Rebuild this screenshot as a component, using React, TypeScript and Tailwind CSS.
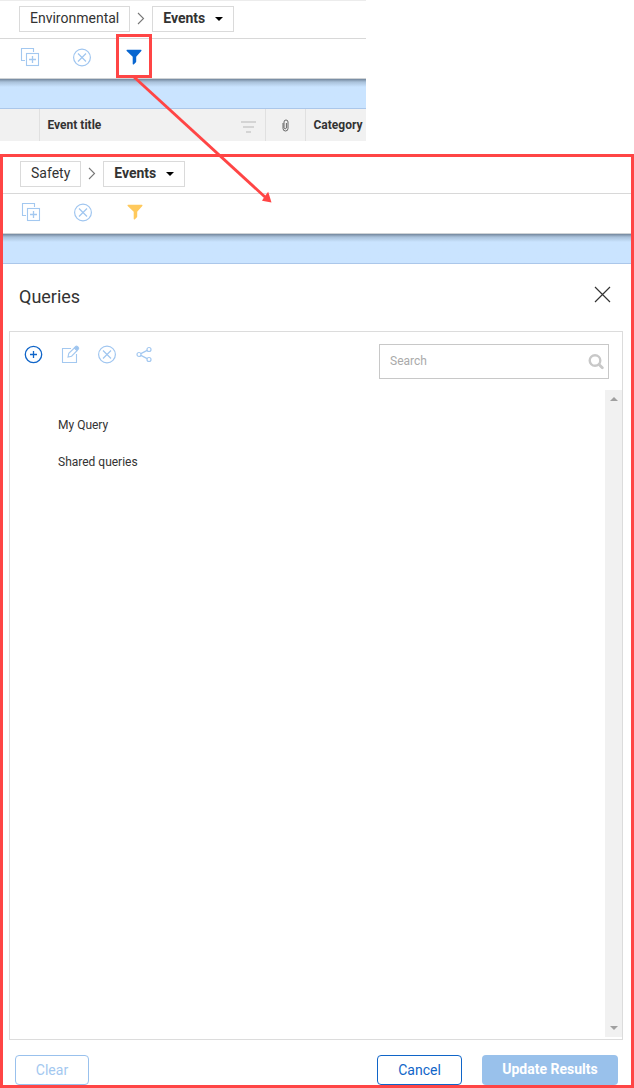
import { useState } from "react";

function AddCopyIcon() {
  return (
    <svg width="20" height="20" viewBox="0 0 20 20" fill="none" stroke="#a3c8f0" strokeWidth="1.1" aria-hidden="true">
      <path d="M5 13.500H1.500V1.500H13.500V5" />
      <rect x="6.500" y="6.500" width="12" height="12" />
      <path d="M12.500 9v7M9 12.500h7" strokeWidth="1.300" />
    </svg>
  );
}

function CircleXIcon() {
  return (
    <svg width="20" height="20" viewBox="0 0 20 20" fill="none" stroke="#a0c6f0" strokeWidth="1.2" aria-hidden="true">
      <circle cx="10" cy="10.500" r="8.400" />
      <path d="M6 6.500l8 8M14 6.500l-8 8" />
    </svg>
  );
}

function CirclePlusIcon() {
  return (
    <svg width="20" height="20" viewBox="0 0 20 20" fill="none" stroke="#1065c8" strokeWidth="1.3" aria-hidden="true">
      <circle cx="10.500" cy="10.500" r="8.200" />
      <path d="M10.500 7v7M7 10.500h7" />
    </svg>
  );
}

function EditIcon() {
  return (
    <svg width="20" height="20" viewBox="0 0 20 20" fill="none" stroke="#a3c8f0" strokeWidth="1.1" aria-hidden="true">
      <path d="M11 4.500H2.500v14h14V10" />
      <path d="M8 13l.8-3.600L14.300 4l2.700 2.700L11.600 12.200z" />
      <path d="M14.500 3.700l1.200-1.200q.8-.8 1.700 0l.9.9q.9.900 0 1.800l-1.200 1.200z" fill="#9cc3ee" />
    </svg>
  );
}

function ShareIcon() {
  return (
    <svg width="20" height="20" viewBox="0 0 20 20" fill="none" stroke="#a3c8f0" strokeWidth="1.2" aria-hidden="true">
      <circle cx="5" cy="10.500" r="2" />
      <circle cx="15" cy="5.500" r="2" />
      <circle cx="15" cy="15.500" r="2" />
      <path d="M6.900 9.600l6.300-3.200M6.900 11.400l6.300 3.200" />
    </svg>
  );
}

function FunnelIcon({ color }: { color: string }) {
  return (
    <svg width="20" height="20" viewBox="0 0 20 20" fill={color} aria-hidden="true">
      <path d="M3.200 2.800h13.600q1.200 0 .5 1.200L12.200 9.800v4.800q0 .6-.5 1l-2 1.800q-1 .6-1-.6V9.800L2.700 4q-.7-1.200.5-1.200z" />
    </svg>
  );
}

function AppBar({ site, funnel, tight, marked }: { site: string; funnel: string; tight?: boolean; marked?: boolean }) {
  const inset = tight ? "pl-[17px]" : "pl-[19px]";
  return (
    <header>
      <nav
        aria-label="Breadcrumb"
        className={`flex items-center border-b border-[#d8d8d8] pb-[6px] text-sm text-[#333] ${inset} ${tight ? "pt-1" : "border-t border-t-[#ececec] pt-[5px]"}`}
      >
        <a href="#site" className="flex h-[26px] items-center border border-[#dadada] px-[10px] pb-[2px]">
          {site}
        </a>
        <svg width="22" height="14" viewBox="0 0 22 14" fill="none" stroke="#777" strokeWidth="1.1" aria-hidden="true">
          <path d="M8 1l5.500 5.500L8 12" />
        </svg>
        <button className="flex h-[26px] items-center gap-[10px] border border-[#dadada] px-[10px] pb-[2px] font-bold">
          Events
          <svg width="8" height="4" viewBox="0 0 8 4" className="mt-[2px]" aria-hidden="true">
            <path d="M0 0h8L4 4z" fill="#000" />
          </svg>
        </button>
      </nav>
      <div className={`flex h-10 items-center gap-8 border-b border-[#cfd3d6] pb-[3px] ${tight ? "pl-[18px]" : "pl-5"}`}>
        <button aria-label="Add" disabled>
          <AddCopyIcon />
        </button>
        <button aria-label="Delete" disabled>
          <CircleXIcon />
        </button>
        <button aria-label="Filter" className="relative">
          <FunnelIcon color={funnel} />
          {marked && <span className="absolute -top-[13px] -left-2 h-[44px] w-9 border-[3px] border-[#ff4545]" />}
        </button>
      </div>
      <div className="h-[30px] border-b border-[#abc7ea] bg-[#cae4ff] bg-linear-to-b from-[#72869c] via-[#a9c1da] via-[3px] to-[#cae4ff] to-[8px]" />
    </header>
  );
}

export default function App() {
  const [search, setSearch] = useState("");
  return (
    <div className="relative flex min-h-screen flex-col bg-white font-[Roboto,sans-serif] text-[#333]">
      <section className="w-[366px] max-w-full">
        <AppBar site="Environmental" funnel="#0866d0" marked />
        <table className="w-full table-fixed border-collapse bg-[#f1f1f1] text-left text-xs">
          <colgroup>
            <col className="w-[39px]" />
            <col />
            <col className="w-10" />
            <col className="w-[61px]" />
          </colgroup>
          <thead>
            <tr className="h-8">
              <th aria-label="Select" />
              <th className="border-l border-[#e0e0e0] pl-2">
                <div className="flex items-center justify-between pr-2">
                  Event title
                  <svg width="16" height="13" viewBox="0 0 16 13" className="mt-1" aria-hidden="true">
                    <path d="M0 1h15M2 6h11M5 11h5" stroke="#d4d4d4" strokeWidth="2" />
                  </svg>
                </div>
              </th>
              <th aria-label="Attachments" className="border-l border-[#e0e0e0]">
                <svg width="7" height="13" viewBox="0 0 7 13" className="mx-auto" fill="none" stroke="#666" strokeWidth="1" aria-hidden="true">
                  <path d="M1 4v5.500a2.500 2.500 0 0 0 5 0V3a2 2 0 0 0-4 0v6a1.300 1.300 0 0 0 2.400 0V4" />
                </svg>
              </th>
              <th className="border-l border-[#e0e0e0] pl-2">Category</th>
            </tr>
          </thead>
        </table>
      </section>

      <section className="mt-[13px] flex grow flex-col border-[3px] border-[#ff4545]">
        <AppBar site="Safety" funnel="#ffc95c" tight />
        <div className="flex h-[67px] items-center justify-between pr-5 pb-[2px] pl-4">
          <h1 className="text-lg">Queries</h1>
          <button aria-label="Close" className="pb-1">
            <svg width="17" height="17" viewBox="0 0 17 17" stroke="#333" strokeWidth="1.200" aria-hidden="true">
              <path d="M1 1l15 15M16 1L1 16" />
            </svg>
          </button>
        </div>

        <main className="mr-2 ml-[6px] flex grow flex-col border border-[#dcdcdc]">
          <div className="flex items-start justify-between pt-3 pr-[13px] pl-[13px]">
            <div className="flex gap-[17px]">
              <button aria-label="New query">
                <CirclePlusIcon />
              </button>
              <button aria-label="Edit query" disabled>
                <EditIcon />
              </button>
              <button aria-label="Delete query" disabled>
                <CircleXIcon />
              </button>
              <button aria-label="Share query" disabled>
                <ShareIcon />
              </button>
            </div>
            <div className="flex h-[35px] w-[230px] items-center border border-[#c8c8c8] pr-1 pl-[10px]">
              <input
                aria-label="Search"
                placeholder="Search"
                value={search}
                onChange={(e) => setSearch(e.target.value)}
                className="min-w-0 grow pb-[2px] text-xs outline-none placeholder:text-[#aaa]"
              />
              <svg width="16" height="16" viewBox="0 0 16 16" fill="none" stroke="#c8c8c8" aria-hidden="true">
                <circle cx="7" cy="6.500" r="5.300" strokeWidth="2.400" />
                <path d="M11 10.500l3.300 3.300" strokeWidth="2.800" strokeLinecap="round" />
              </svg>
            </div>
          </div>
          <div className="mt-[11px] mb-[2px] flex grow">
            <ul className="grow pt-4 pl-12 text-xs">
              <li className="flex h-[37px] items-center">My Query</li>
              <li className="flex h-[37px] items-center">Shared queries</li>
            </ul>
            <div className="flex w-[17px] flex-col items-center justify-between bg-[#f1f1f1] py-[7px]">
              <button aria-label="Scroll up">
                <svg width="8" height="4" viewBox="0 0 8 4" className="block" aria-hidden="true">
                  <path d="M0 4h8L4 0z" fill="#a0a0a0" />
                </svg>
              </button>
              <button aria-label="Scroll down">
                <svg width="8" height="4" viewBox="0 0 8 4" className="block" aria-hidden="true">
                  <path d="M0 0h8L4 4z" fill="#a0a0a0" />
                </svg>
              </button>
            </div>
          </div>
        </main>

        <footer className="mt-[15px] flex pr-[13px] pl-3 text-sm">
          <button disabled className="h-[30px] w-[74px] rounded-[4px] border border-[#99c1ed] text-[#a3c8f0]">
            Clear
          </button>
          <button className="ml-auto h-[30px] w-[85px] rounded-[4px] border border-[#1065c8] text-[#1065c8]">Cancel</button>
          <button disabled className="ml-5 h-[30px] w-[136px] rounded-[4px] bg-[#99c1eb] pb-[2px] font-bold text-white">
            Update Results
          </button>
        </footer>
      </section>

      <svg width="140" height="128" viewBox="0 0 140 128" className="pointer-events-none absolute top-[76px] left-[133px]" aria-hidden="true">
        <path d="M1 1l131 120" stroke="#ff4545" strokeWidth="2.800" />
        <path d="M138.500 126.500l-9.500-1.800 2.600-4.200 3.600-4.800z" fill="#ff4545" />
      </svg>
    </div>
  );
}
